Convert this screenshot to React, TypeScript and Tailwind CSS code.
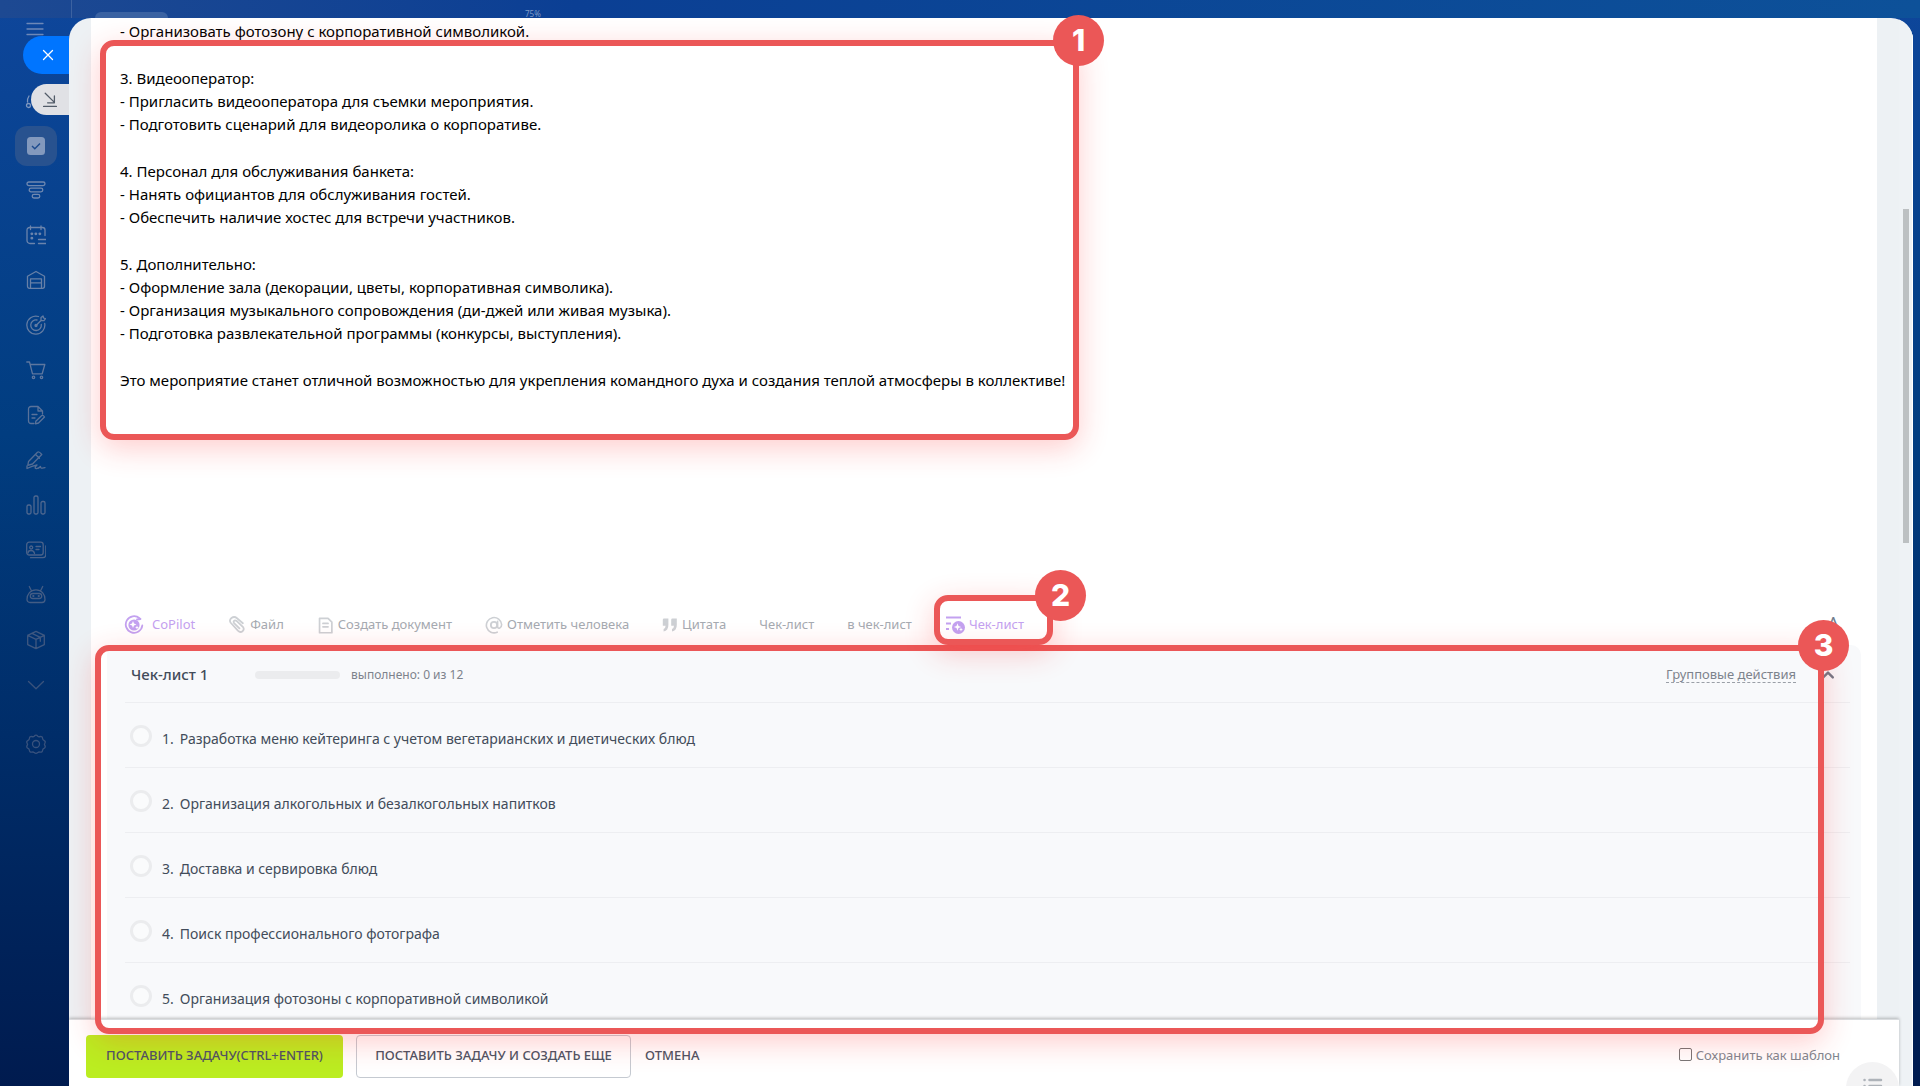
import type { ReactNode } from 'react';

const sections = [
  ['- Организовать фотозону с корпоративной символикой.'],
  ['3. Видеооператор:', '- Пригласить видеооператора для съемки мероприятия.', '- Подготовить сценарий для видеоролика о корпоративе.'],
  ['4. Персонал для обслуживания банкета:', '- Нанять официантов для обслуживания гостей.', '- Обеспечить наличие хостес для встречи участников.'],
  [
    '5. Дополнительно:',
    '- Оформление зала (декорации, цветы, корпоративная символика).',
    '- Организация музыкального сопровождения (ди-джей или живая музыка).',
    '- Подготовка развлекательной программы (конкурсы, выступления).',
  ],
  ['Это мероприятие станет отличной возможностью для укрепления командного духа и создания теплой атмосферы в коллективе!'],
];

const items = [
  'Разработка меню кейтеринга с учетом вегетарианских и диетических блюд',
  'Организация алкогольных и безалкогольных напитков',
  'Доставка и сервировка блюд',
  'Поиск профессионального фотографа',
  'Организация фотозоны с корпоративной символикой',
];

function Icon({ children, className = 'size-5' }: { children: ReactNode; className?: string }) {
  return (
    <svg
      viewBox="0 0 20 20"
      fill="none"
      stroke="currentColor"
      strokeWidth="1.3"
      strokeLinecap="round"
      strokeLinejoin="round"
      className={`shrink-0 ${className}`}
      aria-hidden="true"
    >
      {children}
    </svg>
  );
}

const navIcons: { label: string; tone: string; icon: ReactNode }[] = [
  {
    label: 'CRM',
    tone: 'text-[#6f88b0]',
    icon: (
      <>
        <rect x="1" y="2" width="18" height="3.6" rx="1.8" />
        <rect x="3.2" y="8.2" width="13.6" height="3.6" rx="1.8" />
        <rect x="6.2" y="14.4" width="7.6" height="3.6" rx="1.8" />
      </>
    ),
  },
  {
    label: 'Календарь',
    tone: 'text-[#6b84ac]',
    icon: (
      <>
        <path d="M8.5 18.5H4a3 3 0 0 1-3-3V5a2.5 2.5 0 0 1 2.5-2.5h13A2.5 2.5 0 0 1 19 5v5.5M4.5 1v3.500M15 1v3.500M12.500 14.500h7.500M12.500 18.500h7.500" />
        <path d="M9.800 8.800h.1M13.800 8.800h.1M5.800 8.800h.1M5.800 13.200h.1" strokeWidth="2.8" />
      </>
    ),
  },
  {
    label: 'Склад',
    tone: 'text-[#6780a7]',
    icon: (
      <>
        <path d="M1.500 6.300 10 1.500l8.500 4.800v10a2 2 0 0 1-2 2h-13a2 2 0 0 1-2-2z" />
        <path d="M4.500 18V8.800h11V18M4.500 12.800h11" />
      </>
    ),
  },
  {
    label: 'Маркетинг',
    tone: 'text-[#637ca3]',
    icon: (
      <>
        <path d="M12.500 1.500A9 9 0 1 0 18.700 8.500" />
        <path d="M11 5A5.300 5.300 0 1 0 15.300 9.500" />
        <path d="m10 10.500 5-5V2.500L17 1l.6 2 1.900.6-1.500 2h-3" />
        <circle cx="10" cy="10.500" r="1" fill="currentColor" />
      </>
    ),
  },
  {
    label: 'Магазин',
    tone: 'text-[#5e779f]',
    icon: (
      <>
        <path d="M.8 2h2.700l3 11.800h9.700L18.800 4.500H4.300" />
        <circle cx="7.500" cy="17.300" r="1.2" />
        <circle cx="15.500" cy="17.300" r="1.2" />
      </>
    ),
  },
  {
    label: 'Документы',
    tone: 'text-[#59729a]',
    icon: (
      <>
        <path d="M8 18.500H5a2.500 2.500 0 0 1-2.500-2.500V4A2.500 2.500 0 0 1 5 1.500h7L16.500 6v3M12 1.500V6h4.500M6 9.500h5M6 13h3" />
        <path d="m9.800 16.300 6-5.800q1.500-.6 2.700 1.500l-6 6-3 .8z" />
      </>
    ),
  },
  {
    label: 'Подпись',
    tone: 'text-[#546d95]',
    icon: (
      <>
        <path d="m2.500 11.500 9-9.300q1.500-1 4.300 2.300l-9.300 9.500-4.700 1.300zM9.500 4.500l4 3.800" />
        <path d="M1 16v2.500q5-2.500 10-3.500c-5 5 1.500 4 3.500 1.500 0 2.500 2 1.500 4.500 1.200" />
      </>
    ),
  },
  {
    label: 'Аналитика',
    tone: 'text-[#4f6890]',
    icon: (
      <>
        <rect x="1" y="10" width="4" height="9" rx="1.5" />
        <rect x="8" y="1" width="4" height="18" rx="1.5" />
        <rect x="15" y="6.500" width="4" height="12.500" rx="1.5" />
      </>
    ),
  },
  {
    label: 'Контакты',
    tone: 'text-[#49628a]',
    icon: (
      <>
        <rect x="0.7" y="2.2" width="16.5" height="12.8" rx="2.5" />
        <path d="M4.500 17.700h12.300a3 3 0 0 0 3-3V6M10 6.500h4.500M10 9.500h3M2 13q0-2.500 3-2.500T8.500 13.500" />
        <circle cx="5.200" cy="7.500" r="1.5" />
      </>
    ),
  },
  {
    label: 'Роботы',
    tone: 'text-[#445d85]',
    icon: (
      <>
        <path d="M1 14.500C1 9 4.500 4.800 10 4.800s9 4.200 9 9.700a3 3 0 0 1-3 3H4a3 3 0 0 1-3-3zM3.300 1.500l2 4M16.700 1.500l-2 4" />
        <rect x="4.300" y="8.500" width="11.400" height="5" rx="2.5" />
        <path d="M7.300 11h.1M12.700 11h.1" strokeWidth="2.2" />
      </>
    ),
  },
  {
    label: 'Маркет',
    tone: 'text-[#3f5880]',
    icon: <path d="m10 1.300 8.300 4v9.400L10 18.700l-8.300-4V5.300zM1.700 5.300 10 9.300l8.300-4M10 9.300v9.400M6 3.300l8.300 4v4" />,
  },
  { label: 'Ещё', tone: 'text-[#3a537c]', icon: <path d="m2.500 6.500 7.500 7.300 7.500-7.300" /> },
];

interface ToolProps {
  label: string;
  icon?: ReactNode;
  purple?: boolean;
}

function Tool({ label, icon, purple }: ToolProps) {
  return (
    <button className={`flex items-center gap-1 whitespace-nowrap ${purple ? 'text-[#c3a1f0]' : 'text-[#a5aab1]'}`}>
      {icon}
      <span>{label}</span>
    </button>
  );
}

interface CalloutProps {
  number: number;
  className: string;
  badge?: string;
}

function Callout({ number, className, badge = '-right-[31px]' }: CalloutProps) {
  return (
    <div
      className={`absolute rounded-[14px] border-6 border-[#eb5757] shadow-[0_8px_30px_rgba(255,40,40,0.24)] ${className}`}
    >
      <span
        className={`absolute -top-[31px] flex size-[51px] items-center justify-center rounded-full bg-[#eb5757] font-['Inter',sans-serif] text-[30px] font-extrabold text-white ${badge}`}
      >
        {number}
      </span>
    </div>
  );
}

export default function App() {
  return (
    <div className="relative flex h-screen overflow-hidden bg-linear-to-b from-[#0e469b] via-[#013d80] via-40% to-[#001b4f] font-['Noto_Sans',sans-serif]">
      <div className="absolute inset-x-0 top-0 h-[18px] bg-linear-to-r from-[#1d4992] via-[#0b3f94] via-30% to-[#0d5199]" />
      <div className="absolute top-0 left-[71px] h-[18px] w-px bg-[#3c62a1]" />
      <div className="absolute top-3 left-[95px] h-3 w-[73px] rounded-t-md bg-[#3a62a2]" />
      <span className="absolute top-2 left-[525px] text-[8px] leading-3 text-[#7f9bc7]">75%</span>

      <nav className="relative flex w-[69px] shrink-0 flex-col items-center pt-[19px]">
        <button aria-label="Меню" className="text-[#6d88b8]">
          <Icon>
            <path d="M2 4.500h16M2 10h16M2 15.500h16" />
          </Icon>
        </button>
        <button aria-label="Лента" className="mt-[52px] mb-[15px] text-[#7d96bf]">
          <Icon>
            <path d="M4 5q-2 3-1.500 6" />
            <circle cx="3.500" cy="14.500" r="2" />
          </Icon>
        </button>
        <button aria-label="Задачи" className="mb-[14px] ml-[3px] flex h-10 w-[42px] items-center justify-center rounded-xl bg-[#28528f]">
          <svg viewBox="0 0 18 18" className="size-[18px]" aria-hidden="true">
            <rect width="18" height="18" rx="3.5" fill="#8399bd" />
            <path d="m5 9 2.800 2.800L13 6.500" fill="none" stroke="#1d4b8e" strokeWidth="1.4" />
          </svg>
        </button>
        <div className="flex flex-col gap-[25px]">
          {navIcons.map((nav) => (
            <button key={nav.label} aria-label={nav.label} className={`ml-[2px] ${nav.tone}`}>
              <Icon>{nav.icon}</Icon>
            </button>
          ))}
        </div>
        <button aria-label="Настройки" className="mt-[39px] ml-[2px] text-[#38527d]">
          <Icon>
            <circle cx="10" cy="10" r="3.5" />
            <path d="M8.200 2.200Q10 .2 11.800 2.200q.9.900 2.200.4 2.400-.5 2.600 1.900.1 1.400 1.300 1.800 2.100 1 .9 3-.7 1 0 2.100 1.200 2-.9 3-1.200.5-1.300 1.800-.2 2.400-2.600 1.900-1.300-.4-2.200.5Q10 20 8.200 18.600q-.9-.9-2.200-.5-2.400.5-2.600-1.900-.1-1.300-1.300-1.800-2.100-1-.9-3 .7-1.100 0-2.100-1.200-2 .9-3 1.200-.4 1.300-1.800.2-2.400 2.600-1.900 1.300.5 2.200-.4z" />
          </Icon>
        </button>
      </nav>

      <div className="relative mt-[18px] mr-[7px] flex min-w-0 flex-1">
        {/* Slider handles */}
        <button aria-label="Закрыть" className="absolute top-[18px] right-full flex h-[38px] w-[46px] items-center justify-center rounded-l-full bg-[#0075ff] pl-1 text-white">
          <Icon>
            <path d="m5.500 5.500 9 9M14.500 5.500l-9 9" />
          </Icon>
        </button>
        <button aria-label="Свернуть" className="absolute top-[66px] right-full flex h-[31px] w-[38px] items-center justify-center rounded-l-full bg-[#e0e1e5] text-[#525c69]">
          <Icon className="size-4">
            <path d="m4 1.500 11.500 11.500M15.500 5v8.500H7M2 18h16" strokeWidth="1.6" />
          </Icon>
        </button>

        <div className="flex min-w-0 flex-1 overflow-hidden rounded-t-[22px] bg-[#edf1f4]">
          <div className="flex min-w-0 flex-1 flex-col">
            <main className="min-h-0 flex-1 overflow-hidden px-[22px]">
              <div className="bg-white pt-[2px]">
                <div className="flex min-h-[585px] flex-col gap-6 pl-[29px] text-[15px] leading-[23px] text-black">
                  {sections.map((lines) => (
                    <div key={lines[0]}>
                      {lines.map((line) => (
                        <p key={line}>{line}</p>
                      ))}
                    </div>
                  ))}
                </div>

                {/* Editor toolbar */}
                <div className="flex h-10 items-center justify-between pr-[38px] pl-[33px] text-[13px]">
                  <div className="flex items-center gap-[33px]">
                    <Tool
                      purple
                      label="CoPilot"
                      icon={
                        <Icon className="mr-1 size-5">
                          <path d="M15.500 3.200A8.300 8.300 0 1 0 18.300 10.500" strokeWidth="1.8" />
                          <circle cx="10" cy="10" r="5.6" fill="currentColor" stroke="none" />
                          <path d="M13 4.500 16.500 4" strokeWidth="1.8" />
                          <path d="m9 6 1 2.500 2.500 1-2.500 1-1 2.500-1-2.500-2.500-1 2.500-1zM13 10.500l.6 1.400 1.400.6-1.400.6-.6 1.400-.6-1.400-1.400-.6 1.400-.6z" fill="white" stroke="none" />
                        </Icon>
                      }
                    />
                    <Tool
                      label="Файл"
                      icon={
                        <Icon className="size-[18px] text-[#cdd0d4]">
                          <path d="M16.500 8 10 2.500C6-1 0 3.500 3 7.500l8 8.800c3.500 3.500 8.300-.5 5.500-4.300L9.500 5.500c-2.500-1.500-4 .5-2.800 2.300l6 6" strokeWidth="2" />
                        </Icon>
                      }
                    />
                    <Tool
                      label="Создать документ"
                      icon={
                        <Icon className="size-[17px] text-[#cdd0d4]">
                          <path d="M3 1.500h10L17.500 6v12.500H3zM7 7.500h6M7 11.500h6" strokeWidth="2" />
                        </Icon>
                      }
                    />
                    <Tool
                      label="Отметить человека"
                      icon={
                        <Icon className="size-[18px] text-[#cdd0d4]">
                          <circle cx="10" cy="10" r="3.5" strokeWidth="2" />
                          <path d="M14 6v6c.5 3 4.500 1.500 4.500-2.500A8.500 8.500 0 1 0 13.500 18" strokeWidth="1.8" />
                        </Icon>
                      }
                    />
                    <Tool
                      label="Цитата"
                      icon={
                        <Icon className="size-4 text-[#cdd0d4]">
                          <path d="M1 3.500Q1 2 2.500 2H8v8q0 7-6 8v-3q2.500-1 2.500-4H1zM11.500 3.500Q11.500 2 13 2h5.500v8q0 7-6 8v-3q2.500-1 2.500-4h-3.500z" fill="currentColor" stroke="none" />
                        </Icon>
                      }
                    />
                    <Tool label="Чек-лист" />
                    <Tool label="в чек-лист" />
                    <Tool
                      purple
                      label="Чек-лист"
                      icon={
                        <Icon className="size-5">
                          <path d="M1 2.500h15M1 8.500h5M1 14h3" strokeWidth="2.2" strokeLinecap="butt" />
                          <circle cx="13.500" cy="12.500" r="6.5" fill="currentColor" stroke="none" />
                          <path d="m12.500 8.300 1 2.700 2.700 1-2.700 1-1 2.700-1-2.700-2.700-1 2.700-1zM16 12.500l.6 1.400 1.400.6-1.400.6-.6 1.400-.6-1.400-1.400-.6 1.400-.6z" fill="white" stroke="none" />
                        </Icon>
                      }
                    />
                  </div>
                  <button className="self-start text-lg leading-9 text-[#6f7c8c]">A</button>
                </div>

                {/* Checklist */}
                <section className="mx-4 rounded-t-[10px] bg-[#f8f9fb] pr-[11px] pb-6 pl-[18px]">
                  <header className="flex h-[58px] items-center border-b border-[#edeef1] pt-[2px] pl-[6px] text-[#424c5a]">
                    <h2 className="w-[124px] text-[15px] font-medium">Чек-лист 1</h2>
                    <div className="h-2 w-[85px] rounded-full bg-[#ebecee]" />
                    <span className="ml-[11px] text-[12px] text-[#7d838c]">выполнено: 0 из 12</span>
                    <a href="#group" className="ml-auto border-b border-dashed border-[#9a9fa7] text-[13px] leading-4 text-[#7d838c]">
                      Групповые действия
                    </a>
                    <button aria-label="Свернуть чек-лист" className="mr-[14px] ml-6 text-[#6f7987]">
                      <Icon className="size-4">
                        <path d="m4 13 6-6 6 6" strokeWidth="3" />
                      </Icon>
                    </button>
                  </header>
                  <ol>
                    {items.map((item, index) => (
                      <li key={item} className="h-[65px] border-b border-[#edeef1] pl-[5px]">
                        <label className="flex h-full items-center gap-[10px] pt-[6px] text-[14px] text-[#424c5a]">
                          <input type="checkbox" className="mb-1 size-[22px] appearance-none rounded-full border-3 border-[#ebecee] bg-[#fafbfc]" />
                          <span className="flex gap-[6px]">
                            <span>{index + 1}.</span>
                            <span>{item}</span>
                          </span>
                        </label>
                      </li>
                    ))}
                  </ol>
                </section>
              </div>
            </main>

            <footer className="relative flex h-[67px] shrink-0 items-center overflow-hidden border-t border-[#d9dcdf] bg-white pt-[6px] pr-[59px] pl-[17px] text-[#4b5464] shadow-[0_-1px_3px_rgba(0,0,0,0.25)]">
              <button className="h-[43px] w-[257px] rounded-sm bg-[#bbed21] text-[13px] font-medium">ПОСТАВИТЬ ЗАДАЧУ(CTRL+ENTER)</button>
              <button className="ml-[13px] h-[43px] w-[275px] rounded-sm border border-[#c5cad1] text-[13px] font-medium">ПОСТАВИТЬ ЗАДАЧУ И СОЗДАТЬ ЕЩЕ</button>
              <button className="ml-[14px] text-[13px] font-medium">ОТМЕНА</button>
              <label className="ml-auto flex items-center gap-1 text-[13px] text-[#80868f]">
                <input type="checkbox" className="mb-1 size-[13px] appearance-none rounded-xs border border-[#767676] bg-white" />
                Сохранить как шаблон
              </label>
              <button aria-label="Список" className="absolute top-[42px] right-0 flex size-[53px] justify-center rounded-full bg-[#f3f3f4] pt-[12px] text-[#aeb3b9]">
                <Icon>
                  <path d="M1.500 6h.1M6.500 6H18M1.500 12h.1M6.500 12H18" strokeWidth="2.5" />
                </Icon>
              </button>
            </footer>
          </div>

          <div className="w-[14px] shrink-0 border-r border-white bg-[#eef2f5] pt-[191px] pl-1">
            <div className="h-[334px] w-[6px] bg-[#bcc0c2]" />
          </div>
        </div>

        {/* Numbered highlights */}
        <div className="pointer-events-none absolute inset-0">
          <Callout number={1} className="top-[22px] left-[31px] h-[400px] w-[979px]" />
          <Callout number={3} className="top-[627px] right-[89px] bottom-[52px] left-[26px]" />
          <Callout number={2} className="top-[577px] left-[865px] h-[50px] w-[119px]" badge="-right-[39px]" />
        </div>
      </div>
    </div>
  );
}
